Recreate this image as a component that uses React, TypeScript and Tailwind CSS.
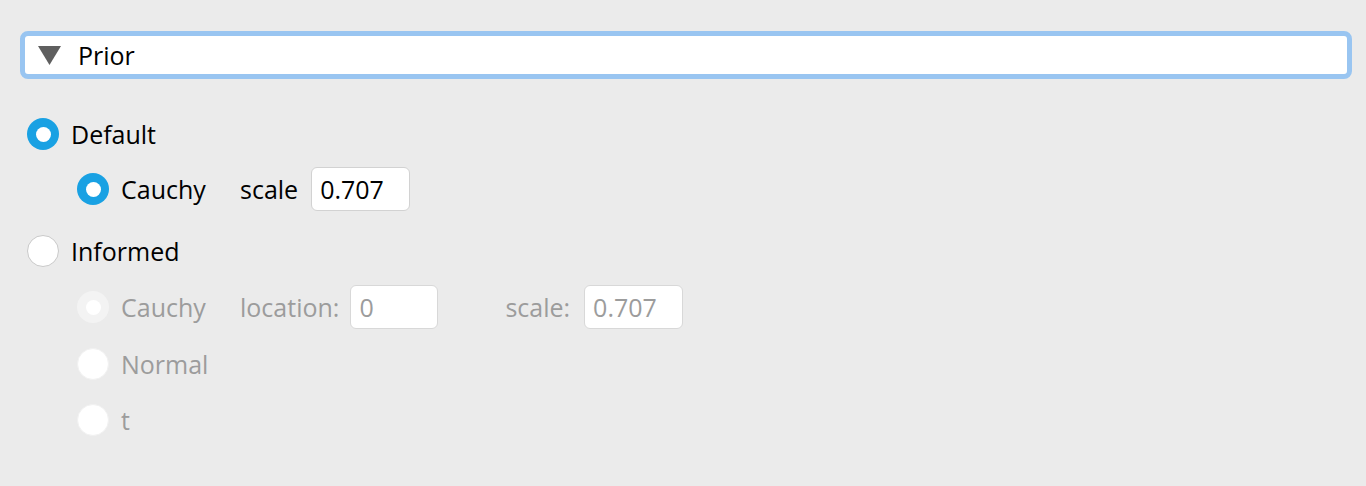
import React from "react";

function Radio({ checked, disabled }: { checked?: boolean; disabled?: boolean }) {
  if (checked && !disabled) {
    return (
      <div className="w-[32px] h-[32px] rounded-full bg-[#19a1e3] flex items-center justify-center shrink-0">
        <div className="w-[15px] h-[15px] rounded-full bg-white" />
      </div>
    );
  }
  if (checked && disabled) {
    return (
      <div className="w-[32px] h-[32px] rounded-full bg-[#f3f3f3] flex items-center justify-center shrink-0">
        <div className="w-[15px] h-[15px] rounded-full bg-white" />
      </div>
    );
  }
  if (disabled) {
    return <div className="w-[32px] h-[32px] rounded-full bg-white border-[1.5px] border-[#f1f1f1] shrink-0" />;
  }
  return <div className="w-[32px] h-[32px] rounded-full bg-white border-[1.5px] border-[#c9c9c9] shrink-0" />;
}

function Field({ value, width, disabled }: { value: string; width: string; disabled?: boolean }) {
  return (
    <div
      className={
        "h-[44px] rounded-[6px] bg-white border-[1.5px] flex items-center pl-[8px] shrink-0 " +
        width +
        (disabled ? " border-[#d8d8d8] text-[#9c9c9c]" : " border-[#d2d2d2] text-black")
      }
    >
      {value}
    </div>
  );
}

export default function App() {
  return (
    <div
      className="w-[1366px] h-[486px] bg-[#ebebeb] overflow-hidden text-[25px] leading-none text-black"
      style={{ fontFamily: '"Open Sans", "Noto Sans", sans-serif' }}
    >
      <div className="pt-[31px] pl-[20px]">
        <div className="w-[1332px] h-[48px] rounded-[8px] border-[5px] border-[#99c5f1] bg-white flex items-center pl-[13px]">
          <svg width="23" height="19" viewBox="0 0 23 19" className="shrink-0">
            <polygon points="0,0 23,0 11.5,19" fill="#5f5f5f" />
          </svg>
          <span className="ml-[17px]">Prior</span>
        </div>
      </div>

      <div className="pl-[27px] pt-[39px] flex flex-col">
        {/* Default */}
        <div className="h-[32px] flex items-center">
          <Radio checked />
          <span className="ml-[12px]">Default</span>
        </div>

        {/* Cauchy scale */}
        <div className="h-[32px] mt-[23px] pl-[50px] flex items-center">
          <Radio checked />
          <span className="ml-[12px] w-[119px]">Cauchy</span>
          <span>scale</span>
          <div className="ml-[13px]">
            <Field value="0.707" width="w-[99px]" />
          </div>
        </div>

        {/* Informed */}
        <div className="h-[32px] mt-[30px] flex items-center">
          <Radio />
          <span className="ml-[12px]">Informed</span>
        </div>

        {/* Cauchy disabled */}
        <div className="h-[32px] mt-[24px] pl-[50px] flex items-center text-[#9c9c9c]">
          <Radio checked disabled />
          <span className="ml-[12px] w-[119px]">Cauchy</span>
          <span>location:</span>
          <div className="ml-[11px]">
            <Field value="0" width="w-[88px]" disabled />
          </div>
          <span className="ml-[67px]">scale:</span>
          <div className="ml-[14px]">
            <Field value="0.707" width="w-[99px]" disabled />
          </div>
        </div>

        {/* Normal */}
        <div className="h-[32px] mt-[25px] pl-[50px] flex items-center text-[#9c9c9c]">
          <Radio disabled />
          <span className="ml-[12px]">Normal</span>
        </div>

        {/* t */}
        <div className="h-[32px] mt-[24px] pl-[50px] flex items-center text-[#9c9c9c]">
          <Radio disabled />
          <span className="ml-[12px]">t</span>
        </div>
      </div>
    </div>
  );
}
